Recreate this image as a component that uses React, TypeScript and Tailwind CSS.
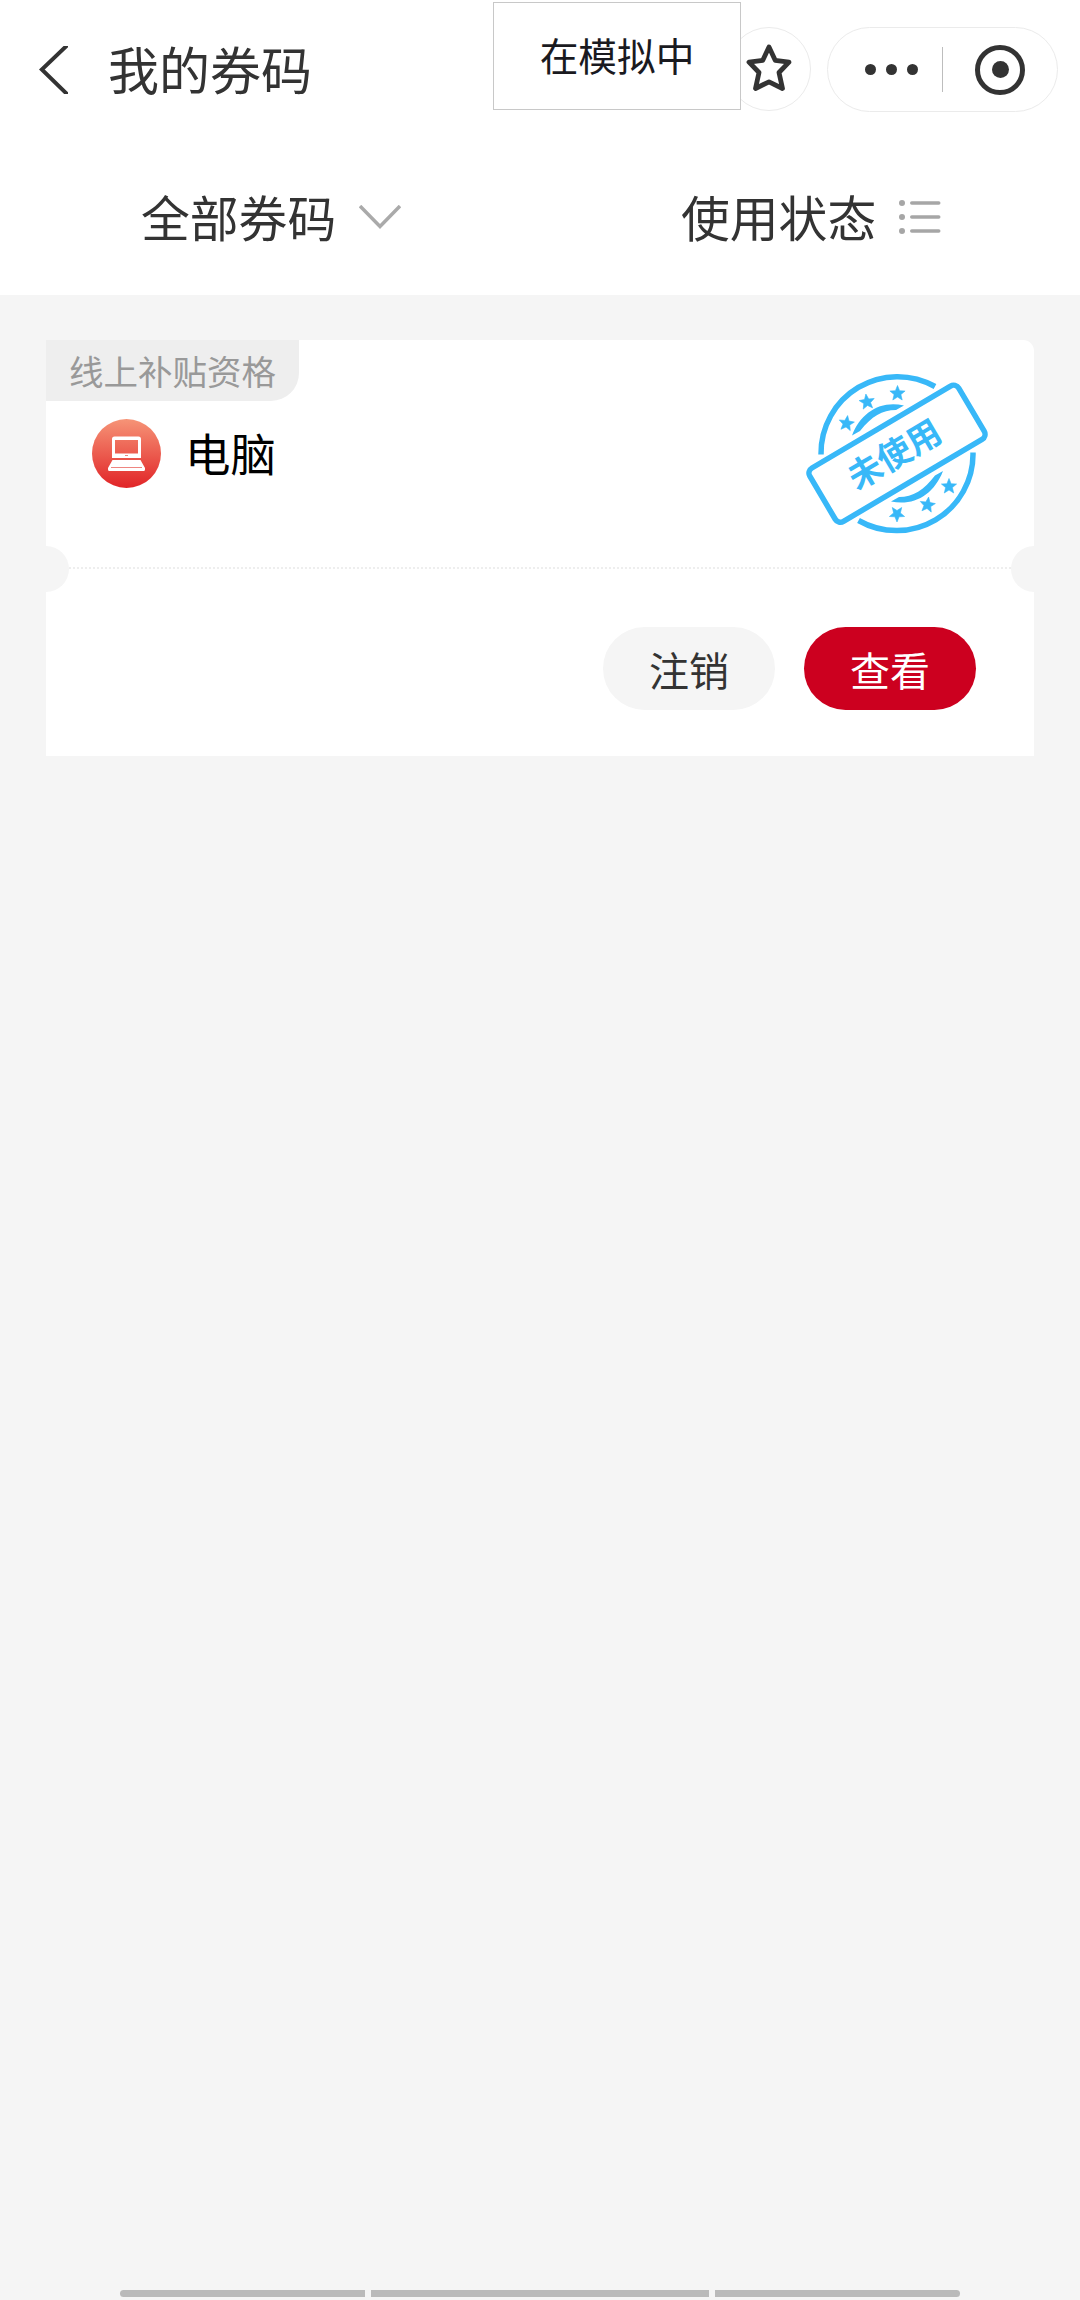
import React from 'react';

const FONT = "font-['Noto_Sans_CJK_SC',sans-serif]";

// five-pointed star used around the stamp
const STAR = 'M0-8 2.1-2.8 7.6-2.5 3.4 1.1 4.7 6.5 0 3.5-4.7 6.5-3.4 1.1-7.6-2.5-2.1-2.8Z';

const STAMP_STARS = [
  { x: 56.5, y: 73.5, r: 8 },
  { x: 77, y: 52, r: -8 },
  { x: 107.5, y: 43.5, r: 0 },
  { x: 107, y: 164, r: 180 },
  { x: 137.5, y: 155, r: 8 },
  { x: 159, y: 136.5, r: 0 },
];

function BackIcon() {
  return (
    <svg width="29" height="48" viewBox="0 0 29 48" fill="none" stroke="#333" strokeWidth="4">
      <path d="M28.5 -1 2.8 23.5 28.5 48.5" />
    </svg>
  );
}

function StarIcon() {
  return (
    <svg className="-mt-[4px]" width="48" height="50" viewBox="0 0 48 50" fill="none" stroke="#333" strokeWidth="4.8" strokeLinejoin="round">
      <path d="M24 5 30.2 18.3 44 20.2 34 30.5 37.5 46.5 24 39.8 10.5 46.5 14 30.5 4 20.2 17.8 18.3Z" />
    </svg>
  );
}

function LaptopIcon() {
  return (
    <svg width="69" height="69" viewBox="0 0 69 69">
      <defs>
        <linearGradient id="laptop-bg" x1="0" y1="0" x2="0" y2="1">
          <stop offset="0" stopColor="#f69477" />
          <stop offset="1" stopColor="#e12427" />
        </linearGradient>
      </defs>
      <circle cx="34.5" cy="34.5" r="34.5" fill="url(#laptop-bg)" />
      <path
        fill="#fff"
        fillRule="evenodd"
        d="M22.5 17.5h24a2.500 2.500 0 0 1 2.500 2.500v19H20V20a2.500 2.500 0 0 1 2.500-2.500ZM23 21v13.500h23V21Z"
      />
      <path fill="#fff" d="M20.5 41h28L53 49v1.500a1.500 1.500 0 0 1-1.500 1.500h-34a1.500 1.500 0 0 1-1.500-1.500V49Z" />
      <path stroke="#ee8580" strokeWidth="1.2" d="M19 48.5h31M33 36.5h3" />
    </svg>
  );
}

function UnusedStamp() {
  return (
    <svg className="block" width="220" height="200" viewBox="0 0 220 200">
      <g fill="none" stroke="#38b8f8" strokeWidth="5.5">
        <path d="M31 104.5A76.500 76.500 0 0 1 145 36.500" />
        <path d="M68.500 170.500A76.500 76.500 0 0 0 183 102.500" />
        <rect x="-86.5" y="-31" width="173" height="62" rx="6" transform="translate(107 103.7) rotate(-30.6)" />
      </g>
      <g fill="#38b8f8">
        <path d="M62 85.500C71 62 91 50 114 55.500L106 60C92 60 82 66 70 81Z" />
        <path d="M153 121C144 144.500 124 156.500 101 151.500L109 147C123 147 134 140 145 125.500Z" />
        {STAMP_STARS.map((s, i) => (
          <path key={i} d={STAR} transform={`translate(${s.x} ${s.y}) rotate(${s.r})`} stroke="#38b8f8" strokeWidth="0.6" />
        ))}
        <text
          x="0"
          y="12"
          textAnchor="middle"
          className="text-[34px] font-bold"
          transform="translate(104.5 104.5) rotate(-30.6)"
        >
          未使用
        </text>
      </g>
    </svg>
  );
}

function Header() {
  return (
    <header className="relative flex h-[139px] items-center bg-white pl-[39px] pr-[22px] text-[#333]">
      <BackIcon />
      <h1 className="-mt-[4px] ml-[40px] text-[51px] leading-[70px]">我的券码</h1>

      <div className="ml-auto flex items-start gap-[16px]">
        <div className="flex h-[84px] w-[84px] items-center justify-center rounded-full border border-[#ebebeb]">
          <StarIcon />
        </div>
        <div className="flex h-[85px] w-[231px] items-center rounded-full border border-[#ebebeb]">
          <div className="ml-[37px] flex gap-[10px]">
            <span className="h-[11px] w-[11px] rounded-full bg-[#333]" />
            <span className="h-[11px] w-[11px] rounded-full bg-[#333]" />
            <span className="h-[11px] w-[11px] rounded-full bg-[#333]" />
          </div>
          <span className="ml-[24px] h-[45px] w-px bg-[#bdbdbd]" />
          <div className="ml-[32px] flex h-[50px] w-[50px] items-center justify-center rounded-full border-[5.5px] border-[#333]">
            <span className="h-[17px] w-[17px] rounded-full bg-[#333]" />
          </div>
        </div>
      </div>

      {/* Floating notice over the header */}
      <div className="absolute left-[493px] top-[2px] flex h-[108px] w-[248px] items-center justify-center border border-[#c8c8c8] bg-white pb-[3px] text-[38.7px] text-[#1a1a1f]">
        在模拟中
      </div>
    </header>
  );
}

function FilterBar() {
  return (
    <div className="grid h-[156px] grid-cols-2 bg-white text-[48.8px] leading-[70px] text-[#333]">
      <div className="flex items-start pl-[141px] pt-[42px]">
        <span>全部券码</span>
        <svg className="ml-[23px] mt-[24px]" width="42" height="25" viewBox="0 0 42 25" fill="none" stroke="#aaa" strokeWidth="3.5">
          <path d="M1 1 21 21.5 41 1" />
        </svg>
      </div>
      <div className="flex items-start pl-[141px] pt-[42px]">
        <span>使用状态</span>
        <svg className="ml-[23px] mt-[19px]" width="42" height="35" viewBox="0 0 42 35" fill="#a6a6a6">
          {[3, 17, 31].map(y => (
            <g key={y}>
              <circle cx="3" cy={y} r="3" />
              <rect x="11" y={y - 1.75} width="30.5" height="3.5" rx="1.75" />
            </g>
          ))}
        </svg>
      </div>
    </div>
  );
}

function CouponCard() {
  return (
    <section className="relative mx-[46px] mt-[45px] h-[416px] overflow-hidden rounded-tr-[11px] bg-white">
      <div className="flex h-[227px] justify-between">
        <div>
          <div className="flex h-[61px] w-[253px] items-center rounded-br-[28px] bg-[#eee] pl-[23px] text-[34.5px] text-[#999]">
            线上补贴资格
          </div>
          <div className="mt-[18px] flex h-[69px] items-center pl-[46px]">
            <LaptopIcon />
            <span className="-mt-[4px] ml-[24px] text-[45.5px] leading-[60px] text-black">电脑</span>
          </div>
        </div>
        <div className="mr-[24px] mt-[10px]">
          <UnusedStamp />
        </div>
      </div>

      {/* Perforation */}
      <div className="mx-[23px] h-[2px] bg-[repeating-linear-gradient(90deg,#eee_0_2px,#fff_2px_4px)]" />
      <span className="absolute -left-[23px] top-[206px] h-[46px] w-[46px] rounded-full bg-[#f5f5f5]" />
      <span className="absolute -right-[23px] top-[206px] h-[46px] w-[46px] rounded-full bg-[#f5f5f5]" />

      <div className="mt-[58px] flex justify-end gap-[29px] pr-[58px] text-[40px]">
        <button className="h-[83px] w-[172px] rounded-full bg-[#f5f5f5] text-[#333]">注销</button>
        <button className="h-[83px] w-[172px] rounded-full bg-[#cc001f] text-white">查看</button>
      </div>
    </section>
  );
}

export default function App() {
  return (
    <div className={`flex h-[2300px] w-[1080px] flex-col bg-[#f5f5f5] ${FONT}`}>
      <Header />
      <FilterBar />
      <CouponCard />
      <div className="mx-[120px] mb-[3px] mt-auto flex h-[7px] gap-[6px]">
        <span className="w-[245px] rounded-l-full bg-[#bababa]" />
        <span className="w-[338px] bg-[#bababa]" />
        <span className="w-[245px] rounded-r-full bg-[#bababa]" />
      </div>
    </div>
  );
}
